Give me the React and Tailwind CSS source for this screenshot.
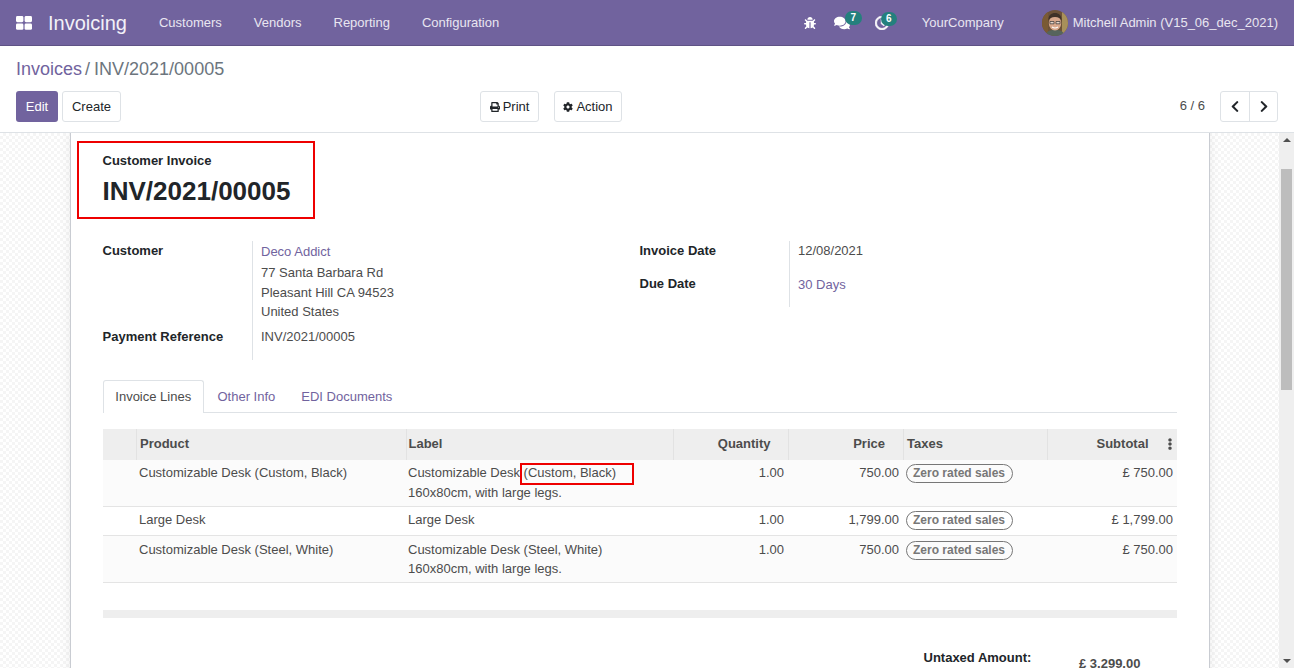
import React from "react";
import { FaBug, FaComments, FaRegClock, FaPrint, FaCog, FaChevronLeft, FaChevronRight, FaEllipsisV } from "react-icons/fa";

const rows = [
  { p: "Customizable Desk (Custom, Black)", l: ["Customizable Desk (Custom, Black)", "160x80cm, with large legs."], price: "750.00", sub: "£ 750.00", cls: "h-[46px] bg-[#fbfbfb]", pt: "pt-[3px]" },
  { p: "Large Desk", l: ["Large Desk"], price: "1,799.00", sub: "£ 1,799.00", cls: "h-[29px] bg-white", pt: "pt-[3px]" },
  { p: "Customizable Desk (Steel, White)", l: ["Customizable Desk (Steel, White)", "160x80cm, with large legs."], price: "750.00", sub: "£ 750.00", cls: "h-[47px] bg-[#fbfbfb]", pt: "pt-[4px]" },
];

function Apps() {
  return (
    <svg width="16" height="14" viewBox="0 0 16 14" fill="#fff">
      <rect x="0" y="0" width="7.4" height="6.2" rx="1.4" />
      <rect x="8.6" y="0" width="7.4" height="6.2" rx="1.4" />
      <rect x="0" y="7.6" width="7.4" height="6.2" rx="1.4" />
      <rect x="8.6" y="7.6" width="7.4" height="6.2" rx="1.4" />
    </svg>
  );
}

function Avatar() {
  return (
    <svg width="26" height="26" viewBox="0 0 26 26" className="rounded-full">
      <rect width="26" height="26" fill="#6d5238" />
      <rect x="0" y="0" width="6" height="26" fill="#7a5a34" />
      <rect x="20" y="0" width="6" height="26" fill="#a8905a" />
      <path d="M3 26c1-5 5-6 10-6s9 1 10 6z" fill="#56645c" />
      <ellipse cx="13" cy="13" rx="6.200" ry="7.500" fill="#d8a88c" />
      <path d="M6.500 11c-.5-6 3-8 6.500-8s7 2 6.500 8c-1-3-3-4-6.500-4s-5.500 1-6.500 4z" fill="#3f3228" />
      <path d="M8 11.500h4v2.300H8zM14 11.500h4v2.300h-4z" fill="#e8d8cc" stroke="#333" strokeWidth=".7" />
      <path d="M10 17c2 1.300 4 1.300 6 0" stroke="#fff" strokeWidth="1.100" fill="none" />
    </svg>
  );
}

function Badge({ n, cls }) {
  return (
    <span className={`absolute top-[-4px] h-[14px] rounded-full bg-[#24807d] text-white text-[10px] font-bold leading-[13px] text-center ${cls}`}>{n}</span>
  );
}

function Th({ children, cls = "" }) {
  return <th className={`border-r border-[#e2e2e2] px-[3px] pb-[2px] font-bold text-[13px] text-[#4c4c4c] ${cls}`}>{children}</th>;
}

export default function App() {
  return (
    <div className="h-[668px] w-[1294px] overflow-hidden flex flex-col bg-white text-[13px] leading-[19.5px] text-[#4c4c4c] font-['Liberation_Sans',Arial,sans-serif]">
      <header className="h-[46px] shrink-0 bg-[#71639e] border-b border-[#5f5385] flex items-center text-white">
        <div className="pl-4 flex items-center">
          <Apps />
        </div>
        <span className="ml-4 text-[20px] leading-[46px] text-[#f3f1f8]">Invoicing</span>
        <nav className="ml-[32px] flex gap-[32px] text-[13px] text-[#e9e6f1]">
          <span>Customers</span>
          <span>Vendors</span>
          <span>Reporting</span>
          <span>Configuration</span>
        </nav>
        <div className="ml-auto flex items-center text-[#e9e6f1]">
          <FaBug className="w-[12px] h-[12px] text-white mr-[18px]" />
          <span className="relative mr-[25px]">
            <FaComments className="w-[16px] h-[16px] text-white" />
            <Badge n="7" cls="left-[11px] w-[17px]" />
          </span>
          <span className="relative mr-[33px]">
            <FaRegClock className="w-[14px] h-[14px] text-white stroke-[30px]" />
            <Badge n="6" cls="left-[6px] w-[16px]" />
          </span>
          <span className="mr-[38px]">YourCompany</span>
          <Avatar />
          <span className="ml-[5px] mr-4">Mitchell Admin (V15_06_dec_2021)</span>
        </div>
      </header>

      <div className="h-[87px] shrink-0 border-b border-[#dee2e6] px-4 relative">
        <div className="pt-[12px] text-[18px] leading-[22px] h-[45px] flex">
          <span className="text-[#71639e]">Invoices</span>
          <span className="text-[#6c757d] ml-[3px] mr-[4px]">/</span>
          <span className="text-[#6c757d]">INV/2021/00005</span>
        </div>
        <div className="flex items-center h-[31px]">
          <button className="h-[31px] w-[42px] rounded-[3px] bg-[#71639e] text-white">Edit</button>
          <button className="h-[31px] w-[59px] ml-1 rounded-[3px] border border-[#dee2e6] bg-white text-[#212529]">Create</button>
          <button className="h-[31px] w-[59px] ml-[359px] rounded-[3px] border border-[#dee2e6] bg-white text-[#212529] flex items-center justify-center gap-[3px]">
            <FaPrint className="w-[10px] h-[10px]" />Print
          </button>
          <button className="h-[31px] w-[68px] ml-[15px] rounded-[3px] border border-[#dee2e6] bg-white text-[#212529] flex items-center justify-center gap-[3px]">
            <FaCog className="w-[10px] h-[10px]" />Action
          </button>
          <span className="ml-auto text-[#4c4c4c] pb-[2px]">6 / 6</span>
          <div className="ml-[15px] flex h-[31px] w-[58px] rounded-[3px] border border-[#dee2e6] text-[#212529]">
            <span className="w-[29px] border-r border-[#dee2e6] flex items-center justify-center"><FaChevronLeft className="w-[12px] h-[13px]" /></span>
            <span className="flex-1 flex items-center justify-center"><FaChevronRight className="w-[12px] h-[13px]" /></span>
          </div>
        </div>
      </div>

      <div className="flex-1 min-h-0 flex overflow-hidden">
        <main className="flex-1 min-w-0 overflow-hidden flex bg-white bg-[repeating-conic-gradient(#f5f5f5_0%_25%,#ffffff_0%_50%)] bg-[length:6px_6px]">
          <div className="ml-[69.5px] w-[1140px] shrink-0 h-[700px] bg-white border-x border-[#c9ccd2] shadow-[0_0_10px_rgba(0,0,0,0.08)] px-[32px] relative">
            <div className="ml-[-25.5px] mt-[8px] w-[238px] h-[78px] border-2 border-[#ee0000] pl-[23.5px] pt-[8px]">
              <div className="font-bold text-[#212529] leading-[19px]">Customer Invoice</div>
              <div className="font-bold text-[26px] leading-[32px] mt-[5px] text-[#212529]">INV/2021/00005</div>
            </div>

            <div className="mt-[22px] flex h-[119px]">
              <div className="w-[537px] flex">
                <div className="w-[149.5px] shrink-0 font-bold text-[#212529]">
                  <div>Customer</div>
                  <div className="mt-[66px]">Payment Reference</div>
                </div>
                <div className="w-[300px] border-l border-[#dee2e6] pl-2">
                  <div className="pt-[1px] leading-[20px] text-[#71639e]">Deco Addict</div>
                  <div className="leading-[21px]">77 Santa Barbara Rd</div>
                  <div className="leading-[20px]">Pleasant Hill CA 94523</div>
                  <div className="leading-[16px] mt-[1px]">United States</div>
                  <div className="mt-[7px]">INV/2021/00005</div>
                </div>
              </div>
              <div className="flex h-[66px]">
                <div className="w-[149.5px] shrink-0 font-bold text-[#212529]">
                  <div>Invoice Date</div>
                  <div className="mt-[13px]">Due Date</div>
                </div>
                <div className="border-l border-[#dee2e6] pl-[8px]">
                  <div>12/08/2021</div>
                  <div className="mt-[14px] text-[#71639e]">30 Days</div>
                </div>
              </div>
            </div>

            <div className="mt-[20px] h-[33px] flex border-b border-[#dee2e6] w-[1074px]">
              <div className="h-[33px] w-[101.5px] border border-b-0 border-[#dee2e6] rounded-t-[3px] bg-white text-center leading-[32px]">Invoice Lines</div>
              <div className="pl-[13.5px] pr-[13px] leading-[33px] text-[#71639e]">Other Info</div>
              <div className="px-[13px] leading-[33px] text-[#71639e]">EDI Documents</div>
            </div>

            <table className="mt-[16px] w-[1074px] table-fixed border-collapse">
              <thead>
                <tr className="h-[31px] bg-[#eeeeee] text-left">
                  <Th cls="w-[34px]" />
                  <Th cls="w-[270px]">Product</Th>
                  <Th cls="w-[267px] !pl-[1.5px]">Label</Th>
                  <Th cls="w-[115px] text-right !pr-[17.5px]">Quantity</Th>
                  <Th cls="w-[115px] text-right !pr-[18px]">Price</Th>
                  <Th cls="w-[144px]">Taxes</Th>
                  <th className="w-[129px] px-[3px] pb-[2px] text-right font-bold text-[13px] text-[#4c4c4c]">
                    <span className="flex items-center justify-end">
                      Subtotal
                      <FaEllipsisV className="w-[10px] h-[12px] ml-[16px] mr-[-1px] text-[#4c4c4c]" />
                    </span>
                  </th>
                </tr>
              </thead>
              <tbody>
                {rows.map((r, i) => (
                  <tr key={i} className={`${r.cls} border-b border-[#e4e4e4] align-top`}>
                    <td />
                    <td className={`pl-[2.5px] ${r.pt}`}>{r.p}</td>
                    <td className={`pl-[1.5px] ${r.pt}`}>
                      {r.l.map((t, j) => <div key={j}>{t}</div>)}
                    </td>
                    <td className={`pr-[4.5px] ${r.pt} text-right`}>1.00</td>
                    <td className={`pr-[4.5px] ${r.pt} text-right`}>{r.price}</td>
                    <td className={`pl-[2px] ${r.pt}`}>
                      <span className="inline-block h-[19px] w-[107px] rounded-full border border-[#777777] text-center text-[12px] font-bold leading-[17px] text-[#777777]">Zero rated sales</span>
                    </td>
                    <td className={`pr-[3.5px] ${r.pt} text-right`}>{r.sub}</td>
                  </tr>
                ))}
              </tbody>
            </table>

            <div className="mt-[27px] h-[8px] w-[1074px] bg-[#eeeeee]" />

            <div className="mt-[30px] ml-[821px] flex font-bold text-[#212529]">
              <span className="w-[155.5px]">Untaxed Amount:</span>
              <span className="mt-[6px] text-[#4c4c4c]">£ 3,299.00</span>
            </div>

            <div className="absolute left-[449.5px] top-[330px] w-[114px] h-[22px] border-2 border-[#ee0000]" />
          </div>
        </main>
        <aside className="w-[15px] shrink-0 bg-[#efefef] flex flex-col items-center justify-between relative">
          <div className="pt-[5px]"><div className="w-0 h-0 border-x-[4px] border-x-transparent border-b-[4px] border-b-[#505050]" /></div>
          <div className="absolute left-[2px] top-[36px] h-[221px] w-[11px] bg-[#bdbdbd]" />
          <div className="pb-[5px]"><div className="w-0 h-0 border-x-[4px] border-x-transparent border-t-[4px] border-t-[#505050]" /></div>
        </aside>
      </div>
    </div>
  );
}
